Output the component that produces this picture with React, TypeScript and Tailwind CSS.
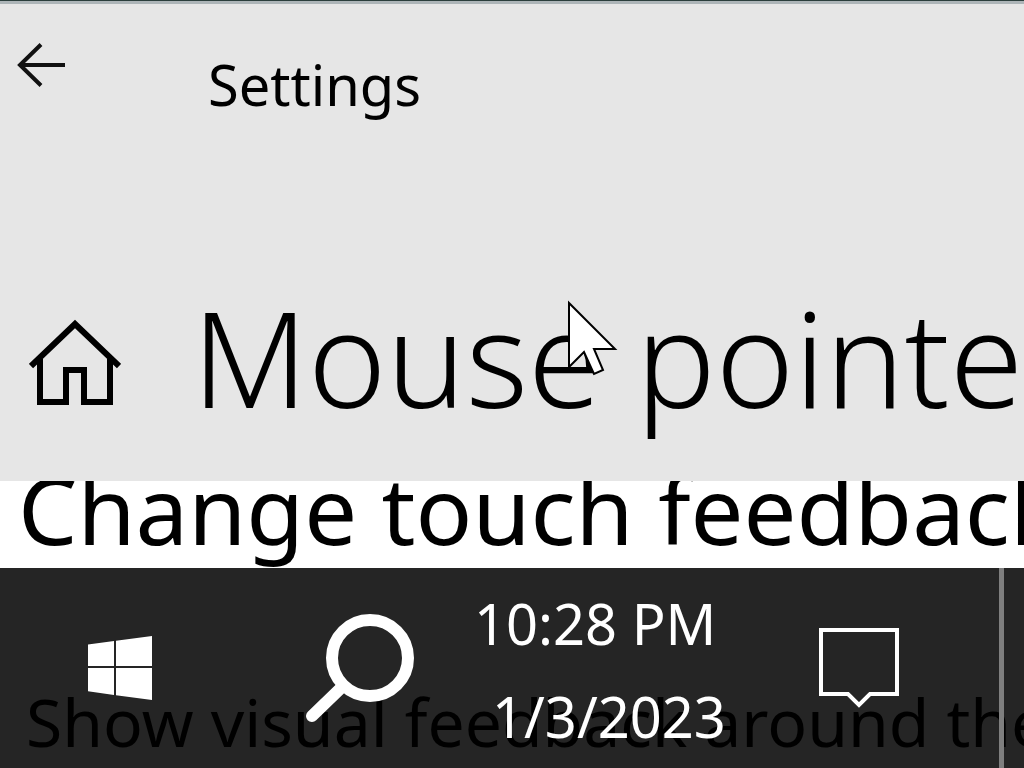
function BackIcon() {
  return (
    <svg width="48" height="46" viewBox="0 0 48 46" fill="none" stroke="#111" strokeWidth="4">
      <path d="M48 22H3M24 1.500L3 22L24 42.500" />
    </svg>
  );
}

function HomeIcon() {
  return (
    <svg width="92" height="88" viewBox="0 0 92 88" fill="none" stroke="#000" strokeWidth="6">
      <path d="M2 47L46 5L90 47" />
      <path d="M11 40V83H37V51H55V83H81V40" />
    </svg>
  );
}

function WindowsIcon() {
  return (
    <svg width="64" height="64" viewBox="0 0 64 64" fill="#fff">
      <path d="M0 8.500L26 5V30H0ZM28 4.700L64 0V30H28ZM0 32H26V59L0 55.300ZM28 32H64V64L28 59.300Z" />
    </svg>
  );
}

function SearchIcon() {
  return (
    <svg width="110" height="110" viewBox="0 0 110 110" fill="none" stroke="#fff">
      <circle cx="65" cy="45" r="38" strokeWidth="12" />
      <path d="M38 73L7 103" strokeWidth="12" strokeLinecap="round" />
    </svg>
  );
}

function MessageIcon() {
  return (
    <svg width="80" height="80" viewBox="0 0 80 80" fill="none" stroke="#fff" strokeWidth="4">
      <path d="M2 2H78V66H51L40 77L29 66H2Z" />
    </svg>
  );
}

function Cursor() {
  return (
    <svg
      className="pointer-events-none absolute left-[567px] top-[300px]"
      width="52"
      height="78"
      viewBox="0 0 52 78"
      fill="#fff"
      stroke="#000"
      strokeWidth="2"
    >
      <path d="M2 3V67L17 52L27 74L36 70L27 49H48Z" />
    </svg>
  );
}

export default function App() {
  return (
    <div className="relative flex min-h-screen flex-col overflow-hidden bg-white font-['Noto_Sans','Open_Sans',sans-serif] text-black">
      <header className="border-t border-[#2b3e3c] bg-[#e6e6e6]">
        <div className="h-[3px] bg-[#adb5b8]" />
        <div className="flex items-start pb-[152px] pl-[17px] pt-[39px]">
          <button type="button" aria-label="Back" className="w-[191px]">
            <BackIcon />
          </button>
          <span className="text-[56px] leading-[82px]">Settings</span>
        </div>
        <div className="flex items-center pb-11 pl-[29px]">
          <button type="button" aria-label="Home" className="w-[163px] shrink-0 pt-3">
            <HomeIcon />
          </button>
          <h1 className="whitespace-nowrap text-[133px] font-[350] leading-[160px]">Mouse pointer</h1>
        </div>
      </header>

      <main className="grow overflow-hidden pb-[31px] pl-[18px]">
        <h2 className="whitespace-nowrap text-[94px] leading-14">Change touch feedback</h2>
      </main>

      <footer className="relative flex h-[200px] items-center overflow-hidden bg-[#252525] text-white">
        <p className="absolute left-[26px] top-[112px] whitespace-nowrap text-[66px] leading-[82px] text-black">
          Show visual feedback around the
        </p>
        <button type="button" aria-label="Start" className="relative ml-[88px]">
          <WindowsIcon />
        </button>
        <button type="button" aria-label="Search" className="relative ml-[153px]">
          <SearchIcon />
        </button>
        <button type="button" className="relative ml-[59px] whitespace-nowrap pt-1 text-[56px] leading-[93px]">
          <time className="block text-left">10:28 PM</time>
          <time className="block pl-[18px] text-left">1/3/2023</time>
        </button>
        <button type="button" aria-label="Notifications" className="relative ml-auto mr-[100px]">
          <MessageIcon />
        </button>
        <div className="relative mr-5 w-[5px] self-stretch bg-[#7f7f7f]" />
      </footer>

      <Cursor />
    </div>
  );
}
